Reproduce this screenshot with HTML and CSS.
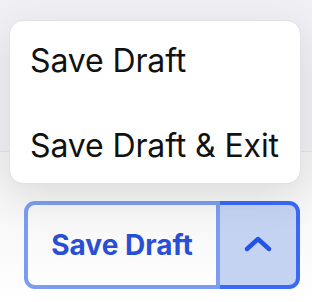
FILE: index.html
```html
<!DOCTYPE html>
<html>
<head>
<meta charset="utf-8">
<link rel="stylesheet" href="styles.css">
</head>
<body>
  <div class="band"></div>
  <div class="menu">
    <div class="menu-item">Save Draft</div>
    <div class="menu-item">Save Draft &amp; Exit</div>
  </div>
  <div class="split">
    <button class="split-main">Save Draft</button>
    <button class="split-toggle" aria-label="More options">
      <svg width="28" height="16" viewBox="0 0 28 16"><path d="M3 13 L14 3 L25 13" fill="none" stroke="#2453e8" stroke-width="4.4" stroke-linecap="round" stroke-linejoin="round"/></svg>
    </button>
  </div>
</body>
</html>
```

FILE: styles.css
```css
* { box-sizing: border-box; }
html, body { margin: 0; padding: 0; }
body {
  width: 312px;
  height: 302px;
  overflow: hidden;
  font-family: Inter, "Noto Sans", sans-serif;
  background: linear-gradient(#ececec 0px, #f4f4f4 180px, #ffffff 302px);
  position: relative;
}
.band {
  height: 152px;
  background: #efeff4;
  border-bottom: 1px solid #e2e2e8;
}
.menu {
  position: absolute;
  left: 9px;
  top: 20px;
  width: 292px;
  height: 164px;
  background: #fff;
  border: 1px solid #e0e0e6;
  border-radius: 14px;
  box-shadow: 0 12px 40px rgba(0, 0, 0, 0.10);
  display: flex;
  flex-direction: column;
  gap: 13px;
  padding: 4px 0 0;
}
.menu-item {
  height: 72px;
  display: flex;
  align-items: center;
  padding-left: 20px;
  font-size: 32px;
  letter-spacing: -0.12px;
  color: #111;
  line-height: 1;
}
.split {
  display: flex;
  margin: 49px 0 0 24px;
  width: 276px;
  height: 88px;
}
.split button {
  font-family: inherit;
  margin: 0;
  cursor: pointer;
}
.split-main {
  width: 196px;
  height: 88px;
  border: 4px solid #7b9cf0;
  border-radius: 11px 0 0 11px;
  background: transparent;
  color: #2a4fd6;
  font-size: 28px;
  font-weight: 700;
  padding: 0;
}
.split-toggle {
  width: 80px;
  height: 88px;
  border: 4px solid #3b68f6;
  border-left: none;
  border-radius: 0 11px 11px 0;
  background: #c5d3f2;
  display: flex;
  align-items: center;
  justify-content: center;
  padding: 0;
}
.split-toggle svg { display: block; margin-top: -2px; }
```
